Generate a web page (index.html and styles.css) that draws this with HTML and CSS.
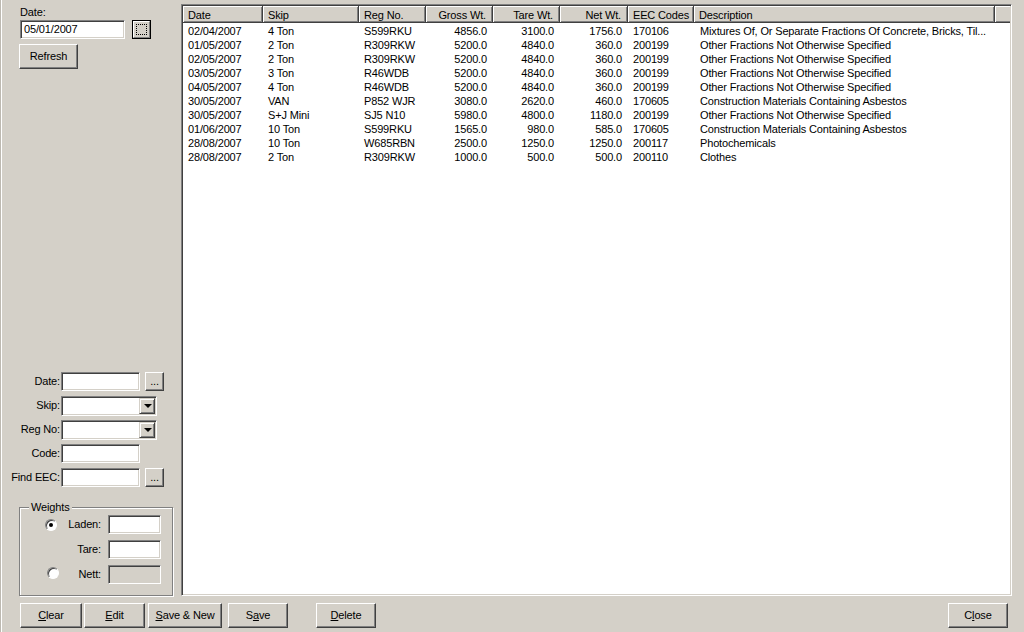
FILE: index.html
```html
<!DOCTYPE html>
<html>
<head>
<meta charset="utf-8">
<link rel="stylesheet" href="styles.css">
</head>
<body>
<div class="window">
  <div class="main">
    <aside class="side">
      <div class="top">
        <div class="cap">Date:</div>
        <div class="toprow">
          <div class="field fdate">05/01/2007</div>
          <div class="pick"><span class="pick-in"><span class="focus"></span></span></div>
        </div>
        <button class="btn refresh">Refresh</button>
      </div>
      <div class="form">
        <div class="frow"><span class="lbl">Date:</span><div class="field f79"></div><button class="btn dots">...</button></div>
        <div class="frow"><span class="lbl">Skip:</span><div class="field combo"><span class="drop"><span class="tri"></span></span></div></div>
        <div class="frow"><span class="lbl">Reg No:</span><div class="field combo"><span class="drop"><span class="tri"></span></span></div></div>
        <div class="frow"><span class="lbl">Code:</span><div class="field f79"></div></div>
        <div class="frow"><span class="lbl">Find EEC:</span><div class="field f79"></div><button class="btn dots">...</button></div>
      </div>
      <fieldset class="group">
        <legend>Weights</legend>
        <div class="wgrid">
          <span class="radio on"><span class="dot"></span></span><span class="wl">Laden:</span><div class="field fw"></div>
          <span></span><span class="wl">Tare:</span><div class="field fw"></div>
          <span class="radio r2"></span><span class="wl">Nett:</span><div class="field fw dis"></div>
        </div>
      </fieldset>
    </aside>
    <section class="list">
      <div class="hdr">
        <div class="hc">Date</div>
        <div class="hc">Skip</div>
        <div class="hc">Reg No.</div>
        <div class="hc num">Gross Wt.</div>
        <div class="hc num">Tare Wt.</div>
        <div class="hc num">Net Wt.</div>
        <div class="hc">EEC Codes</div>
        <div class="hc">Description</div>
        <div class="hc fill"></div>
      </div>
      <div class="rows">
        <div class="r"><span>02/04/2007</span><span>4 Ton</span><span>S599RKU</span><span class="num">4856.0</span><span class="num">3100.0</span><span class="num">1756.0</span><span>170106</span><span>Mixtures Of, Or Separate Fractions Of Concrete, Bricks, Til...</span></div>
        <div class="r"><span>01/05/2007</span><span>2 Ton</span><span>R309RKW</span><span class="num">5200.0</span><span class="num">4840.0</span><span class="num">360.0</span><span>200199</span><span>Other Fractions Not Otherwise Specified</span></div>
        <div class="r"><span>02/05/2007</span><span>2 Ton</span><span>R309RKW</span><span class="num">5200.0</span><span class="num">4840.0</span><span class="num">360.0</span><span>200199</span><span>Other Fractions Not Otherwise Specified</span></div>
        <div class="r"><span>03/05/2007</span><span>3 Ton</span><span>R46WDB</span><span class="num">5200.0</span><span class="num">4840.0</span><span class="num">360.0</span><span>200199</span><span>Other Fractions Not Otherwise Specified</span></div>
        <div class="r"><span>04/05/2007</span><span>4 Ton</span><span>R46WDB</span><span class="num">5200.0</span><span class="num">4840.0</span><span class="num">360.0</span><span>200199</span><span>Other Fractions Not Otherwise Specified</span></div>
        <div class="r"><span>30/05/2007</span><span>VAN</span><span>P852 WJR</span><span class="num">3080.0</span><span class="num">2620.0</span><span class="num">460.0</span><span>170605</span><span>Construction Materials Containing Asbestos</span></div>
        <div class="r"><span>30/05/2007</span><span>S+J Mini</span><span>SJ5 N10</span><span class="num">5980.0</span><span class="num">4800.0</span><span class="num">1180.0</span><span>200199</span><span>Other Fractions Not Otherwise Specified</span></div>
        <div class="r"><span>01/06/2007</span><span>10 Ton</span><span>S599RKU</span><span class="num">1565.0</span><span class="num">980.0</span><span class="num">585.0</span><span>170605</span><span>Construction Materials Containing Asbestos</span></div>
        <div class="r"><span>28/08/2007</span><span>10 Ton</span><span>W685RBN</span><span class="num">2500.0</span><span class="num">1250.0</span><span class="num">1250.0</span><span>200117</span><span>Photochemicals</span></div>
        <div class="r"><span>28/08/2007</span><span>2 Ton</span><span>R309RKW</span><span class="num">1000.0</span><span class="num">500.0</span><span class="num">500.0</span><span>200110</span><span>Clothes</span></div>
      </div>
    </section>
  </div>
  <div class="bar">
    <button class="btn b-clear"><u>C</u>lear</button>
    <button class="btn b-edit"><u>E</u>dit</button>
    <button class="btn b-savenew"><u>S</u>ave &amp; New</button>
    <button class="btn b-save">S<u>a</u>ve</button>
    <button class="btn b-delete"><u>D</u>elete</button>
    <button class="btn b-close">C<u>l</u>ose</button>
  </div>
</div>
</body>
</html>
```
FILE: styles.css
```css
* { box-sizing: border-box; }
body {
  margin: 0;
  background: #d4d0c8;
  font: 11px/13px "Liberation Sans", Arial, sans-serif;
  letter-spacing: -0.15px;
  color: #000;
}
.window {
  width: 1024px;
  height: 632px;
  display: flex;
  flex-direction: column;
  box-shadow: inset 1px 0 #bdb9b1, inset 2px 0 #fff;
  overflow: hidden;
}
.main {
  height: 600px;
  display: flex;
}

/* ---------- side panel ---------- */
.side {
  width: 181px;
  flex: none;
  display: flex;
  flex-direction: column;
  padding: 6px 0 4px 0;
}
.top { padding-left: 20px; }
.cap { height: 13px; margin-bottom: 1px; }
.toprow { display: flex; align-items: center; gap: 7px; }

.field {
  height: 19px;
  background: #fff;
  border: 1px solid;
  border-color: #808080 #fff #fff #808080;
  box-shadow: inset 1px 1px #404040, inset -1px -1px #d4d0c8;
  padding: 2px 3px 0;
  white-space: nowrap;
  position: relative;
}
.fdate { width: 105px; }
.f79 { width: 79px; }
.combo { width: 96px; height: 20px; }
.fw { width: 53px; }
.dis { background: #d4d0c8; }

.pick {
  width: 19px; height: 19px;
  border: 1px solid #000;
  background: #d4d0c8;
  display: flex;
}
.pick-in {
  flex: 1;
  border: 1px solid;
  border-color: #fff #808080 #808080 #fff;
  display: flex; align-items: center; justify-content: center;
}
.focus {
  width: 11px; height: 11px;
  border: 1px dotted #000;
}

.btn {
  font: inherit;
  letter-spacing: inherit;
  color: #000;
  background: #d4d0c8;
  border: 1px solid;
  border-color: #fff #404040 #404040 #fff;
  box-shadow: inset -1px -1px #808080;
  padding: 0;
  margin: 0;
}
.btn u { text-decoration: underline; text-underline-offset: 1px; }
.refresh {
  width: 59px; height: 25px;
  margin: 5px 0 0 -1px;
  display: block;
}
.dots {
  width: 19px; height: 19px;
  margin-left: 5px;
  line-height: 10px;
  padding-bottom: 2px;
}

.form {
  margin-top: auto;
  display: flex;
  flex-direction: column;
  gap: 5px;
}
.frow { display: flex; align-items: center; height: 19px; }
.lbl { width: 61px; text-align: right; padding-right: 1px; }

.drop {
  position: absolute;
  right: 1px; top: 1px;
  width: 16px; height: 16px;
  background: #d4d0c8;
  border: 1px solid;
  border-color: #d4d0c8 #404040 #404040 #d4d0c8;
  box-shadow: inset 1px 1px #fff, inset -1px -1px #808080;
  display: flex; align-items: center; justify-content: center;
}
.tri {
  width: 0; height: 0;
  border-left: 4px solid transparent;
  border-right: 4px solid transparent;
  border-top: 4px solid #000;
  margin-left: 1px;
}

.group {
  margin: 14px 0 0 19px;
  width: 154px;
  height: 95px;
  padding: 1px 0 0 25px;
  border: 1px solid #808080;
  box-shadow: inset 1px 1px #fff, 1px 1px #fff;
  min-width: 0;
}
.group legend {
  padding: 0 2px;
  margin-left: -16px;
  line-height: 13px;
  background: #d4d0c8;
}
.wgrid {
  display: grid;
  grid-template-columns: 13px 50px 53px;
  grid-auto-rows: 19px;
  row-gap: 6px;
  align-items: center;
}
.wl { text-align: right; padding-right: 7px; }
.radio {
  width: 12px; height: 12px;
  border-radius: 50%;
  background: #fff;
  border: 1px solid;
  border-color: #808080 #fff #fff #808080;
  box-shadow: inset 1px 1px #404040;
  display: flex; align-items: center; justify-content: center;
}
.r2 { margin-left: 2px; margin-top: -3px; }
.dot { width: 4px; height: 4px; border-radius: 50%; background: #000; }

/* ---------- list view ---------- */
.list {
  flex: 1;
  margin: 4px 12px 4px 0;
  background: #fff;
  border: 1px solid;
  border-color: #808080 #fff #fff #808080;
  box-shadow: inset 1px 1px #404040, inset -1px -1px #d4d0c8;
  padding: 1px;
  overflow: hidden;
}
.hdr, .r {
  display: grid;
  grid-template-columns: 80px 96px 67px 67px 67px 68px 66px 301px 1fr;
}
.hdr { height: 17px; }
.hc {
  background: #d4d0c8;
  border-right: 1px solid #404040;
  border-bottom: 1px solid #404040;
  box-shadow: inset 1px 1px #fff, inset -1px -1px #808080;
  padding: 3px 6px 0 5px;
  white-space: nowrap;
  overflow: hidden;
}
.hc.fill { border-right: none; box-shadow: inset 1px 1px #fff, inset 0 -1px #808080; }
.rows { padding-top: 2px; }
.r { height: 14px; }
.r span {
  padding: 0 6px 0 5px;
  white-space: nowrap;
  overflow: hidden;
}
.r span:nth-child(8) { padding-left: 6px; }
.num { text-align: right; }

/* ---------- button bar ---------- */
.bar {
  display: flex;
  padding: 3px 16px 0 20px;
}
.bar .btn { height: 25px; width: 60px; }
.b-clear { width: 62px !important; margin-right: 2px; }
.b-edit { width: 61px !important; margin-right: 3px; }
.b-savenew { width: 74px !important; margin-right: 6px; }
.b-save { margin-right: 28px; }
.b-close { margin-left: auto; }
```
